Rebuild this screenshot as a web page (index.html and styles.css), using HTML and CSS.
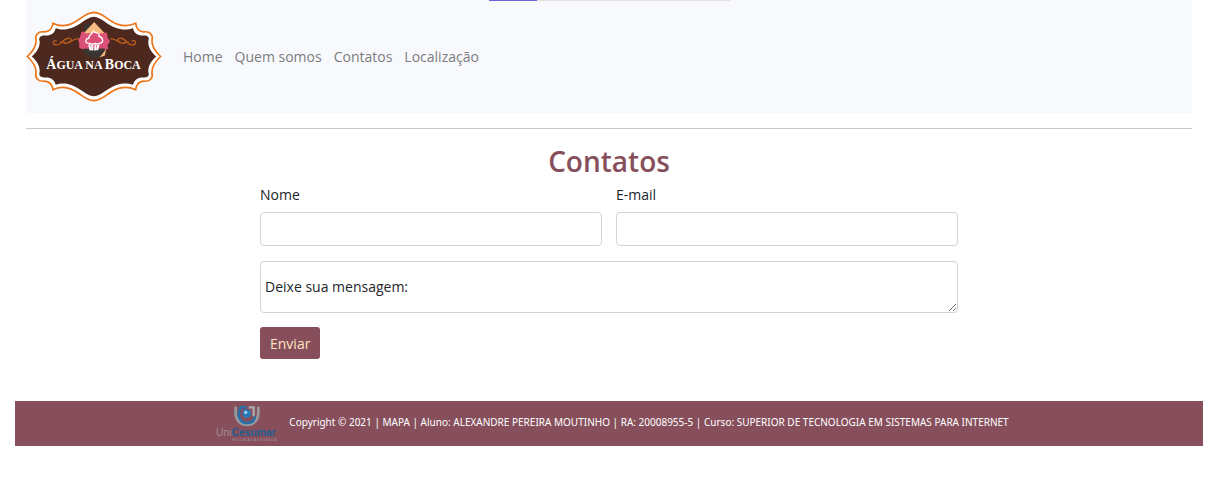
FILE: index.html
```html
<!DOCTYPE html>
<html lang="pt-br">
<head>
<meta charset="utf-8">
<title>Água na Boca - Contatos</title>
<link rel="stylesheet" href="styles.css">
</head>
<body>
<div class="progress"><div class="progress-value"></div></div>
<header class="header">
  <nav class="navbar">
    <a class="brand" href="#" aria-label="Água na Boca">
      <svg class="logo" viewBox="30 34 405 274" role="img" aria-label="Água na Boca">
        <path d="M232 38 C263 39 273 65 307 75 C326 81 343 78 358 71 C360 86 367 96 382 97 C403 94 411 108 407 122 C406 140 416 155 433 171 C416 187 406 202 407 220 C411 234 403 248 382 245 C367 246 360 256 358 271 C343 264 326 261 307 267 C273 277 263 303 232 304 C201 303 191 277 157 267 C138 261 122 264 109 271 C107 256 98 246 83 245 C63 248 54 234 58 220 C59 202 49 187 32 171 C49 155 59 140 58 122 C54 108 63 94 83 97 C98 96 107 86 109 71 C122 78 138 81 157 75 C191 65 201 39 232 38Z" fill="#fff" stroke="#ed7417" stroke-width="5"/>
        <path d="M232 51 C256 53 271 76 302 86 C320 92 336 90 350 86 C353 101 365 109 382 108 C396 107 400 114 396 125 C395 145 406 158 420 171 C406 184 395 197 396 217 C400 228 396 235 382 234 C365 233 353 241 350 256 C336 252 320 250 302 256 C271 266 256 289 232 291 C208 289 193 266 162 256 C144 250 131 252 117 256 C114 241 102 233 86 234 C71 235 65 228 69 217 C70 197 59 184 45 171 C59 158 70 145 69 125 C65 114 71 107 86 108 C102 109 114 101 117 86 C131 90 144 92 162 86 C193 76 208 53 232 51Z" fill="#4c281e"/>
        <path d="M203 76 L218 72 L225 79 L204 101Z" fill="#393532"/>
        <path d="M233 67 L268 105 L198 105Z" fill="#f6bd82"/>
        <path d="M194 98 L202 95 L205 101 H263 L269 97 Q275 107 273 113 L281 126 L273 137 L276 147 L264 153 H207 L188 145 V132 L185 121 L191 111Z" fill="#dc5078"/>
        <path d="M199 148 L267 147 L247 174 L231 178 L206 163Z" fill="#393532"/>
        <path d="M269 149 L265 168 L249 174Z" fill="#f6bd82"/>
        <path d="M214 131 C203 129 207 117 217 116 C216 106 226 105 231 95 C235 103 252 96 247 110 C262 115 262 130 250 131 C245 136 240 131 235 132 C228 136 222 132 214 131Z" fill="#dc5078" stroke="#fff" stroke-width="4"/>
        <path d="M218 135 L222 152 M227 135 L228 153 M237 135 L236 153 M246 135 L242 152" fill="none" stroke="#fff" stroke-width="6"/>
        <g fill="none" stroke="#b85a1c" stroke-width="4" stroke-linecap="round">
          <path d="M119 124 C106 120 108 136 119 136 C137 137 135 120 153 116 C165 114 169 125 157 127 M142 130 C159 138 163 117 185 117 M132 127 L146 129"/>
          <path d="M347 124 C362 120 360 136 347 136 C331 137 333 120 315 116 C303 114 299 125 311 127 M326 130 C309 138 305 117 282 117 M336 127 L322 129"/>
        </g>
        <text class="logo-name" x="231" y="210" text-anchor="middle"><tspan class="cap">Á</tspan>GUA NA <tspan class="cap">B</tspan>OCA</text>
      </svg>
    </a>
    <ul class="menu">
      <li><a href="#">Home</a></li>
      <li><a href="#">Quem somos</a></li>
      <li><a href="#">Contatos</a></li>
      <li><a href="#">Localização</a></li>
    </ul>
  </nav>
  <hr class="rule">
</header>
<main class="main">
  <h1 class="title">Contatos</h1>
  <form class="form">
    <div class="row">
      <div class="field"><label for="nome">Nome</label><input class="control" id="nome" type="text"></div>
      <div class="field"><label for="email">E-mail</label><input class="control" id="email" type="email"></div>
    </div>
    <textarea class="control message" aria-label="Mensagem">Deixe sua mensagem:</textarea>
    <button class="submit" type="button">Enviar</button>
  </form>
</main>
<footer class="footer">
  <svg class="school" viewBox="0 0 189 117" role="img" aria-label="UniCesumar">
    <path d="M55 5 H63 V24 C64 60 122 60 123 24 V5 H131 V28 C128 76 58 76 55 28Z" fill="#98989d"/>
    <path d="M92 7 H74 C61 34 73 54 95 54 C108 54 115 45 117 34" fill="none" stroke="#276fa6" stroke-width="8"/>
    <path d="M98 7 H113 V34" fill="none" stroke="#a9a9ae" stroke-width="7"/>
    <circle cx="92" cy="26" r="13" fill="#2879b5"/>
    <circle cx="89" cy="22" r="5" fill="#9bd3ee"/>
    <text class="school-name" x="0" y="94">Uni<tspan class="school-strong">Cesumar</tspan></text>
    <text class="school-sub" x="49" y="109">EDUCAÇÃO A DISTÂNCIA</text>
  </svg>
  <p class="copyright">Copyright © 2021 | MAPA | Aluno: ALEXANDRE PEREIRA MOUTINHO | RA: 20008955-5 | Curso: SUPERIOR DE TECNOLOGIA EM SISTEMAS PARA INTERNET</p>
</footer>
</body>
</html>
```
FILE: styles.css
```css
* { box-sizing: border-box; }
body {
  margin: 0 28px 0 15px;
  background: #fff;
  color: #212529;
  font: 14px/21px "Open Sans", "Noto Sans", sans-serif;
}
.progress {
  position: absolute;
  top: 0;
  left: 489px;
  width: 241px;
  height: 1px;
  background: #e3e3e6;
}
.progress-value { width: 20%; height: 1px; background: #6c63d9; }
.header { padding: 0 11px; }
.navbar {
  display: flex;
  align-items: center;
  gap: 14px;
  padding: 11px 0;
  background: #f8f9fc;
}
.brand { display: block; }
.logo { display: block; width: 136px; height: 91px; }
.logo-name { font: bold 36px "Liberation Serif", serif; fill: #fff; }
.cap { font-size: 42px; }
.menu { display: flex; gap: 12px; margin: 0; padding: 0 7px; list-style: none; }
.menu a { display: block; padding: 7px 0; color: #7b7c7e; text-decoration: none; }
.rule { margin: 15px 0 0; border: 0; border-top: 1px solid #c8c8c9; }
.main { width: 60%; max-width: 698px; margin: 0 auto; }
.title {
  margin: 15px 0 6px;
  color: #874f5c;
  font-size: 28px;
  line-height: 34px;
  font-weight: 600;
  text-align: center;
}
.row { display: grid; grid-template-columns: 1fr 1fr; gap: 14px; }
.field { display: flex; flex-direction: column; gap: 7px; }
.control {
  width: 100%;
  height: 34px;
  padding: 5px 10px;
  border: 1px solid #ced4da;
  border-radius: 4px;
  background: #fff;
  color: #212529;
  font: inherit;
}
.message {
  display: block;
  height: 52px;
  margin: 15px 0 14px;
  padding: 14px 4px;
  resize: vertical;
}
.submit {
  display: block;
  padding: 6px 10px 5px;
  border: 0;
  border-radius: 3px;
  background: #874f5c;
  color: #ffe4c4;
  font: inherit;
}
.footer {
  display: flex;
  justify-content: center;
  align-items: center;
  gap: 10px;
  min-height: 45px;
  margin-top: 42px;
  padding: 4px 0 2px 7px;
  background: #874f5c;
}
.school { flex: none; width: 63px; height: 39px; }
.school-name { font: 31px "Liberation Sans", sans-serif; fill: #a08d95; }
.school-strong { font-weight: bold; fill: #215f91; }
.school-sub { font: 11px "Liberation Sans", sans-serif; fill: #a18a93; }
.copyright { margin: 0 0 5px; color: #fff; font-family: "Noto Sans", sans-serif; font-size: 10px; }
```
